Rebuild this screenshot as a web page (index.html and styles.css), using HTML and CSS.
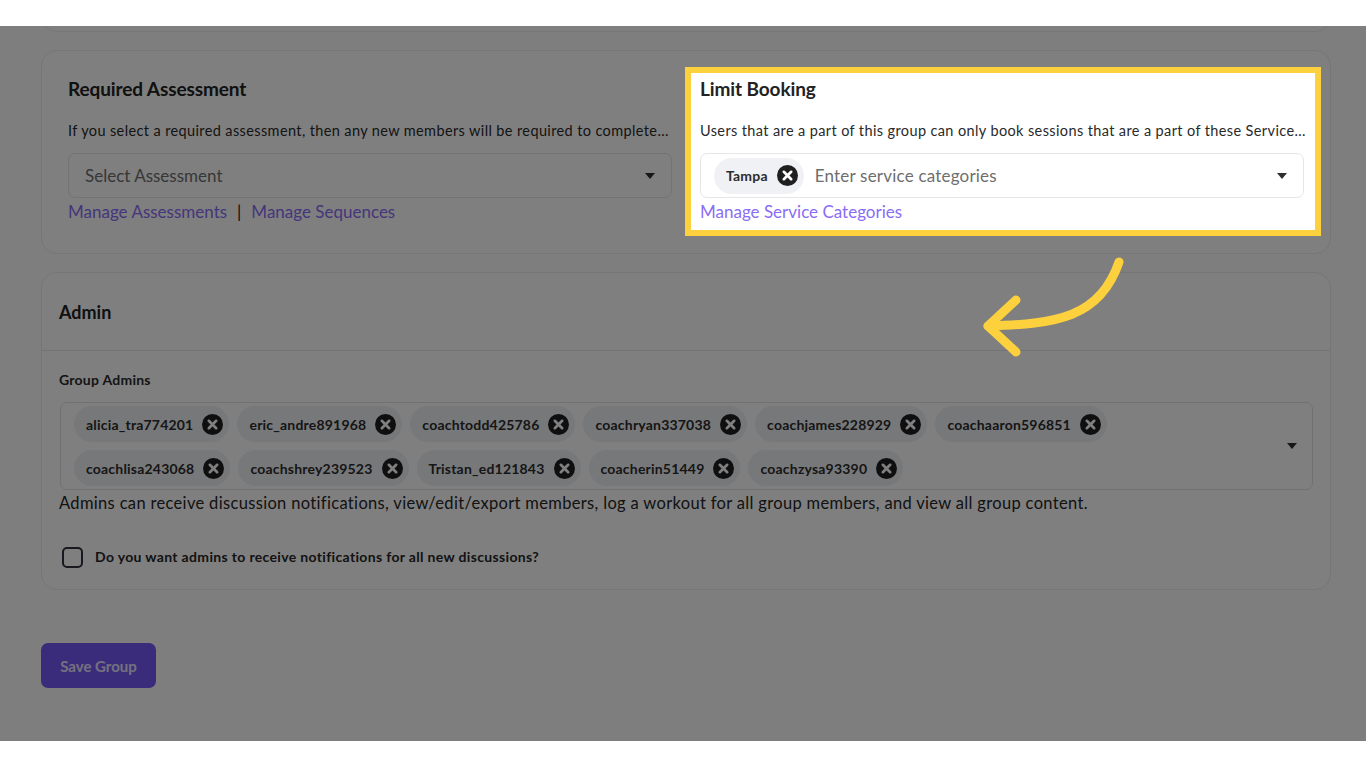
FILE: index.html
```html
<!DOCTYPE html>
<html lang="en">
<head>
<meta charset="utf-8">
<title>Group settings</title>
<link rel="stylesheet" href="styles.css">
</head>
<body>
<div class="topband"></div>
<div class="frame">
  <div class="page">
    <div class="card card-prev"></div>

    <div class="card card-settings">
      <div class="col">
        <h3 class="col-title">Required Assessment</h3>
        <p class="col-desc">If you select a required assessment, then any new members will be required to complete...</p>
        <div class="select">
          <span class="placeholder">Select Assessment</span>
          <span class="caret"></span>
        </div>
        <div class="links">
          <a class="link">Manage Assessments</a>
          <span class="sep">|</span>
          <a class="link">Manage Sequences</a>
        </div>
      </div>
      <div class="col col-highlight">
        <h3 class="col-title">Limit Booking</h3>
        <p class="col-desc">Users that are a part of this group can only book sessions that are a part of these Service...</p>
        <div class="select select-tags">
          <span class="chip">Tampa<span class="chip-x"><svg viewBox="0 0 20 20"><path d="M6.5 6.5l7 7M13.5 6.5l-7 7"/></svg></span></span>
          <span class="placeholder ph-tags">Enter service categories</span>
          <span class="caret"></span>
        </div>
        <div class="links">
          <a class="link">Manage Service Categories</a>
        </div>
      </div>
    </div>

    <div class="card card-admin">
      <div class="admin-head">Admin</div>
      <div class="admin-body">
        <div class="field-label">Group Admins</div>
        <div class="multi">
          <div class="chips">
            <span class="chip">alicia_tra774201<span class="chip-x"><svg viewBox="0 0 20 20"><path d="M6.5 6.5l7 7M13.5 6.5l-7 7"/></svg></span></span>
            <span class="chip">eric_andre891968<span class="chip-x"><svg viewBox="0 0 20 20"><path d="M6.5 6.5l7 7M13.5 6.5l-7 7"/></svg></span></span>
            <span class="chip">coachtodd425786<span class="chip-x"><svg viewBox="0 0 20 20"><path d="M6.5 6.5l7 7M13.5 6.5l-7 7"/></svg></span></span>
            <span class="chip">coachryan337038<span class="chip-x"><svg viewBox="0 0 20 20"><path d="M6.5 6.5l7 7M13.5 6.5l-7 7"/></svg></span></span>
            <span class="chip">coachjames228929<span class="chip-x"><svg viewBox="0 0 20 20"><path d="M6.5 6.5l7 7M13.5 6.5l-7 7"/></svg></span></span>
            <span class="chip">coachaaron596851<span class="chip-x"><svg viewBox="0 0 20 20"><path d="M6.5 6.5l7 7M13.5 6.5l-7 7"/></svg></span></span>
            <span class="chip">coachlisa243068<span class="chip-x"><svg viewBox="0 0 20 20"><path d="M6.5 6.5l7 7M13.5 6.5l-7 7"/></svg></span></span>
            <span class="chip">coachshrey239523<span class="chip-x"><svg viewBox="0 0 20 20"><path d="M6.5 6.5l7 7M13.5 6.5l-7 7"/></svg></span></span>
            <span class="chip">Tristan_ed121843<span class="chip-x"><svg viewBox="0 0 20 20"><path d="M6.5 6.5l7 7M13.5 6.5l-7 7"/></svg></span></span>
            <span class="chip">coacherin51449<span class="chip-x"><svg viewBox="0 0 20 20"><path d="M6.5 6.5l7 7M13.5 6.5l-7 7"/></svg></span></span>
            <span class="chip">coachzysa93390<span class="chip-x"><svg viewBox="0 0 20 20"><path d="M6.5 6.5l7 7M13.5 6.5l-7 7"/></svg></span></span>
          </div>
          <span class="caret"></span>
        </div>
        <p class="admin-note">Admins can receive discussion notifications, view/edit/export members, log a workout for all group members, and view all group content.</p>
        <label class="check-row"><span class="checkbox"></span>Do you want admins to receive notifications for all new discussions?</label>
      </div>
    </div>

    <button class="save-btn">Save Group</button>
  </div>

  <div class="dim"></div>

  <svg class="arrow" viewBox="0 0 160 120" width="160" height="120">
    <path d="M143 6 C 124 62, 80 68, 12 70" />
    <path d="M40 44 L 12 70 L 40 96" />
  </svg>
</div>
<div class="bottomband"></div>
</body>
</html>
```

FILE: styles.css
```css
* { box-sizing: border-box; }

html, body {
  margin: 0;
  padding: 0;
  background: #ffffff;
}

body {
  font-family: "Lato", "Liberation Sans", sans-serif;
  color: #262626;
}

.topband { height: 26px; background: #ffffff; }
.bottomband { height: 27px; background: #ffffff; }

.frame {
  position: relative;
  height: 715px;
  overflow: hidden;
  background: #fcfcfc;
  isolation: isolate;
}

.page {
  padding: 0 35px 0 41px;
  display: flex;
  flex-direction: column;
  align-items: flex-start;
}

.card {
  width: 100%;
  background: #ffffff;
  border: 1px solid #ececec;
  border-radius: 16px;
}

.card-prev {
  height: 40px;
  margin-top: -34px;
}

.card-settings {
  margin-top: 18px;
  display: grid;
  grid-template-columns: 604px 604px;
  column-gap: 28px;
  padding: 27px 26px 31px 26px;
}

.col { min-width: 0; }

.col-title {
  margin: 0;
  font-size: 19px;
  line-height: 22px;
  font-weight: 700;
  color: #222222;
  letter-spacing: -0.1px;
}

.col-desc {
  margin: 21px 0 0;
  font-size: 14.5px;
  line-height: 20px;
  letter-spacing: 0.38px;
  color: #2a2a2a;
  white-space: nowrap;
}

.select {
  margin-top: 12px;
  height: 45px;
  border: 1px solid #e6e6e6;
  border-radius: 7px;
  display: flex;
  align-items: center;
  padding: 0 16px 0 16px;
  gap: 11px;
}

.select-tags { padding-left: 13px; }

.placeholder {
  flex: 1;
  font-size: 17px;
  color: #6e6e6e;
}

.ph-tags { letter-spacing: 0.2px; }

.caret {
  width: 0;
  height: 0;
  border-left: 5.5px solid transparent;
  border-right: 5.5px solid transparent;
  border-top: 6px solid #2e2e2e;
  flex: none;
}

.links {
  margin-top: 4px;
  display: flex;
  align-items: center;
  gap: 10px;
  font-size: 17px;
  line-height: 20px;
}

.link { color: #8a6cf6; }

.sep { color: #222; font-size: 17px; }

.col-highlight {
  position: relative;
  z-index: 3;
  background: #ffffff;
  border: 6px solid #fdd13d;
  padding: 5px 11px 8px 9px;
  margin: -11px -17px -14px -15px;
}

/* chips */
.chip {
  display: inline-flex;
  align-items: center;
  flex: none;
  height: 36px;
  padding: 0 6px 0 12px;
  border-radius: 18px;
  background: #eff1f5;
  font-size: 14px;
  letter-spacing: 0.2px;
  font-weight: 700;
  color: #2c2c2c;
  gap: 9px;
  white-space: nowrap;
}

.chip-x {
  width: 21px;
  height: 21px;
  border-radius: 50%;
  background: #1f1f1f;
  display: inline-flex;
  align-items: center;
  justify-content: center;
}

.chip-x svg {
  width: 21px;
  height: 21px;
  fill: none;
  stroke: #ffffff;
  stroke-width: 2.6;
  stroke-linecap: round;
}

/* admin card */
.card-admin {
  margin-top: 18px;
}

.admin-head {
  height: 78px;
  border-bottom: 1px solid #e6e6e6;
  display: flex;
  align-items: center;
  padding: 0 17px;
  font-size: 18px;
  font-weight: 700;
  color: #222;
}

.admin-body {
  padding: 20px 17px 20px 17px;
}

.field-label {
  font-size: 14px;
  line-height: 18px;
  font-weight: 700;
  letter-spacing: 0.25px;
  color: #2a2a2a;
}

.multi {
  margin-top: 13px;
  margin-left: 1px;
  height: 88px;
  border: 1px solid #e3e3e3;
  border-radius: 7px;
  padding: 3px 15px 3px 13px;
  display: flex;
  align-items: center;
}

.chips {
  flex: 1;
  display: flex;
  flex-wrap: wrap;
  gap: 8px 8px;
  align-self: flex-start;
  padding-right: 70px;
}

.admin-note {
  margin: 1px 0 0;
  font-size: 16.5px;
  line-height: 24px;
  letter-spacing: 0.33px;
  color: #262626;
}

.check-row {
  margin-top: 30px;
  display: flex;
  align-items: center;
  gap: 12px;
  font-size: 14px;
  line-height: 24px;
  font-weight: 700;
  letter-spacing: 0.34px;
  color: #262626;
  padding-left: 3px;
}

.checkbox {
  width: 21px;
  height: 21px;
  border: 2px solid #2e3140;
  border-radius: 5px;
  background: #ffffff;
  flex: none;
}

.save-btn {
  margin-top: 53px;
  width: 115px;
  height: 45px;
  border: none;
  border-radius: 7px;
  background: #7759f6;
  color: #e8e2ff;
  font-family: "Lato", "Liberation Sans", sans-serif;
  font-size: 15px;
  font-weight: 700;
}

/* screen dim overlay */
.dim {
  position: absolute;
  inset: 0;
  background: rgba(0, 0, 0, 0.5);
  z-index: 2;
}

.arrow {
  position: absolute;
  left: 976px;
  top: 230px;
  z-index: 4;
  overflow: visible;
}

.arrow path {
  fill: none;
  stroke: #fdd13d;
  stroke-width: 9;
  stroke-linecap: round;
  stroke-linejoin: round;
}
```
